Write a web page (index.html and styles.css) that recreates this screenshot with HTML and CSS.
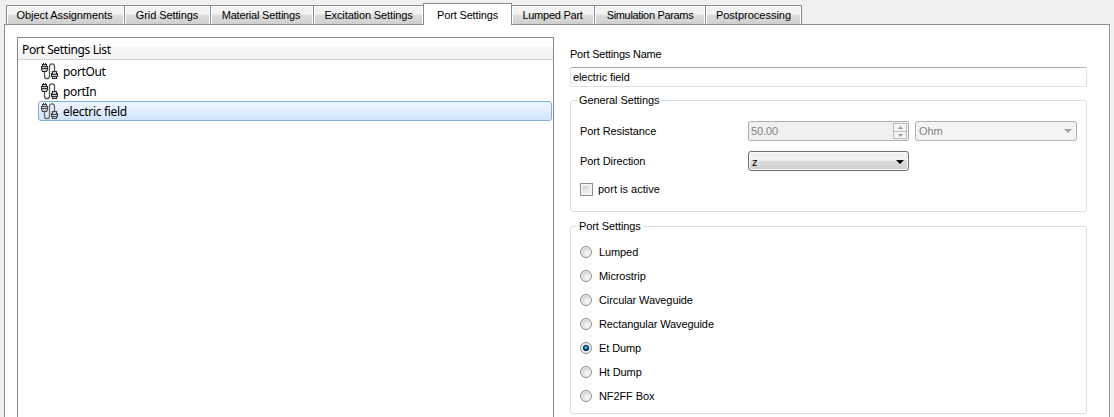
FILE: index.html
```html
<!DOCTYPE html>
<html lang="en">
<head>
<meta charset="utf-8">
<title>Port Settings</title>
<link rel="stylesheet" href="styles.css">
</head>
<body>
<svg class="defs" width="0" height="0">
  <symbol id="cable" viewBox="0 0 17 17">
    <path d="M3.5 8.5V13Q3.5 15.700 6 15.700T8.500 13V3.500Q8.500 .8 11 .8T13.500 3.500V8" fill="none" stroke="#555" stroke-width="1.3"/>
    <path d="M2.500 0v2.500M4.500 0v2.500" stroke="#222" stroke-width="1"/>
    <path d="M1.500 1.500h4v2h1v3L5.500 8.500h-4L.5 6.500v-3h1z" fill="#ccc" stroke="#292929" stroke-width="1.1"/>
    <path d="M1 3.500h5M1 5.500h5" stroke="#333" stroke-width="1"/>
    <path d="M11.500 8.500h4v2h1v3h-1v2h-4v-2h-1v-3h1z" fill="#ccc" stroke="#292929" stroke-width="1.1"/>
    <path d="M11 11.500h5M11 13.500h5" stroke="#333" stroke-width="1"/>
  </symbol>
</svg>
<div class="tabs">
  <div class="tab t1"><span>Object Assignments</span></div>
  <div class="tab t2"><span>Grid Settings</span></div>
  <div class="tab t3"><span>Material Settings</span></div>
  <div class="tab t4"><span>Excitation Settings</span></div>
  <div class="tab t5 current"><span>Port Settings</span></div>
  <div class="tab t6"><span>Lumped Part</span></div>
  <div class="tab t7"><span>Simulation Params</span></div>
  <div class="tab t8"><span>Postprocessing</span></div>
</div>
<main class="pane">
  <section class="tree">
    <div class="tree-head">Port Settings List</div>
    <div class="rows">
      <div class="row"><svg class="icon"><use href="#cable"/></svg><span>portOut</span></div>
      <div class="row"><svg class="icon"><use href="#cable"/></svg><span>portIn</span></div>
      <div class="row selected"><svg class="icon"><use href="#cable"/></svg><span>electric field</span></div>
    </div>
  </section>
  <section class="form">
    <div class="name-label">Port Settings Name</div>
    <div class="field">electric field</div>
    <div class="group general">
      <div class="legend"><span>General Settings</span></div>
      <div class="line">
        <span class="label">Port Resistance</span>
        <div class="spin"><span>50.00</span>
          <div class="steps"><div class="step"><svg width="5" height="3"><path d="M0 3L2.5 0L5 3z" fill="#999"/></svg></div><div class="step"><svg width="5" height="3"><path d="M0 0L2.5 3L5 0z" fill="#999"/></svg></div></div>
        </div>
        <div class="combo disabled"><span>Ohm</span><svg width="8" height="4"><path d="M0 0H8L4 4z" fill="#a0a0a0"/></svg></div>
      </div>
      <div class="line">
        <span class="label">Port Direction</span>
        <div class="combo"><span>z</span><svg width="8" height="4"><path d="M0 0H8L4 4z" fill="#000"/></svg></div>
      </div>
      <div class="check-line"><span class="check"><i></i></span><span>port is active</span></div>
    </div>
    <div class="group kinds">
      <div class="legend"><span>Port Settings</span></div>
      <div class="option"><i class="radio"></i><span>Lumped</span></div>
      <div class="option"><i class="radio"></i><span>Microstrip</span></div>
      <div class="option"><i class="radio"></i><span>Circular Waveguide</span></div>
      <div class="option"><i class="radio"></i><span>Rectangular Waveguide</span></div>
      <div class="option"><i class="radio on"></i><span>Et Dump</span></div>
      <div class="option"><i class="radio"></i><span>Ht Dump</span></div>
      <div class="option"><i class="radio"></i><span>NF2FF Box</span></div>
    </div>
  </section>
</main>
</body>
</html>
```
FILE: styles.css
```css
* { box-sizing: border-box; }
body { margin: 0; width: 1114px; height: 417px; overflow: hidden; background: #f0f0f0; color: #000; font: 11px/14px "Liberation Sans", Arial, sans-serif; letter-spacing: -.1px; }
.defs { display: block; }
.tabs { display: flex; align-items: flex-end; height: 25px; padding-left: 6px; }
.tab { height: 20px; border: 1px solid #898c95; border-right: 0; box-shadow: inset 1px 1px #fff, inset -1px 0 #fff; background: linear-gradient(#f2f2f2 0 45%, #dddddd 50%, #cfcfcf); display: flex; align-items: center; justify-content: center; white-space: nowrap; }
.t1 { width: 118px; letter-spacing: -.07px; padding-right: 2px; }
.t2 { width: 86px; padding-right: 1px; }
.t3 { width: 103px; letter-spacing: -.2px; padding-right: 2px; }
.t4 { width: 110px; letter-spacing: -.12px; }
.t5 { width: 88px; letter-spacing: -.15px; }
.t6 { width: 83px; letter-spacing: -.25px; padding-right: 1px; }
.t7 { width: 111px; letter-spacing: -.33px; }
.t8 { width: 97px; border-right: 1px solid #898c95; letter-spacing: 0; }
.tab.current { width: 89px; margin-right: -1px; height: 22px; background: #fff; box-shadow: none; border-bottom: 0; border-right: 1px solid #898c95; position: relative; z-index: 1; }
.pane { display: flex; width: 1106px; height: 400px; margin: -1px 0 0 4px; border: 1px solid #898c95; background: #fff; padding: 12px 0 0 12px; box-shadow: 1px 0 #fff; }
.tree { width: 537px; height: 390px; border: 1px solid #828790; font: 12px/20px "Noto Sans", sans-serif; letter-spacing: -.36px; }
.tree-head { height: 22px; padding: 2px 0 0 4px; line-height: 20px; border-bottom: 1px solid #d5d5d5; background: linear-gradient(#fff 0 42%, #f7f8fa 45%, #f1f2f4); }
.rows { padding: 1px 1px 0 20px; }
.row { display: flex; align-items: center; height: 20px; padding-left: 2px; border: 1px solid transparent; line-height: 20px; }
.row span { padding-top: 1px; }
.icon { width: 17px; height: 17px; margin-right: 5px; }
.selected { border-color: #84acdd; border-radius: 3px; background: linear-gradient(#eff6fe, #cfe4fd); letter-spacing: -.3px; }
.selected .icon { opacity: .85; }
.form { margin-left: 16px; width: 517px; padding-top: 10px; }
.name-label { height: 20px; letter-spacing: -.22px; }
.field { height: 20px; border: 1px solid #e2e3ea; border-top-color: #abadb3; border-radius: 2px; padding: 2px; }
.group { position: relative; border: 1px solid #d5dfe5; border-radius: 3px; }
.general { margin-top: 13px; height: 112px; padding: 20px 9px 0; }
.kinds { margin-top: 14px; height: 188px; padding: 13px 9px 0; }
.legend { position: absolute; left: 7px; top: -8px; background: #fff; padding: 0 2px 0 1px; }
.line { display: flex; height: 20px; align-items: center; margin-bottom: 10px; }
.label { width: 168px; }
.spin, .combo { display: flex; align-items: center; justify-content: space-between; width: 161px; height: 20px; border: 1px solid #afafaf; border-radius: 2px; }
.spin { padding: 0 1px 0 2px; background: #f0f0f0; color: #838383; }
.steps { width: 14px; height: 16px; border: 1px solid #bdbdbd; background: #f5f5f5; }
.step { height: 7px; display: flex; align-items: center; justify-content: center; }
.step + .step { border-top: 1px solid #bdbdbd; }
.combo { padding: 1px 4px 0 3px; border-color: #707070; border-radius: 3px; box-shadow: inset 0 0 0 1px #fafafa; background: linear-gradient(#f2f2f2 0 45%, #dddddd 50%, #cfcfcf); }
.combo.disabled { width: 162px; margin-left: 6px; padding: 0 4px 0 3px; border-color: #adb2b5; background: #f4f4f4; box-shadow: none; color: #838383; }
.check-line { display: flex; align-items: center; height: 16px; gap: 5px; letter-spacing: 0; }
.check { width: 13px; height: 13px; border: 1px solid #8e8f8f; background: #f4f4f4; padding: 2px; }
.check i { display: block; width: 7px; height: 7px; background: linear-gradient(135deg, #cdd1d6, #f5f5f5); }
.option { display: flex; align-items: center; height: 24px; gap: 7px; }
.radio { width: 12px; height: 12px; border: 1px solid #8e8f8f; border-radius: 50%; box-shadow: inset 0 0 0 1px #f4f4f4; background: radial-gradient(circle at 62% 65%, #f3f4f5 15%, #c5c9ce 75%); }
.on { background: radial-gradient(circle at 5px 4.5px, #8ddcf6 0, #2790c0 1.2px, transparent 2.4px), radial-gradient(circle at center, #0c3458 2.8px, #eee 3.6px); }
```
